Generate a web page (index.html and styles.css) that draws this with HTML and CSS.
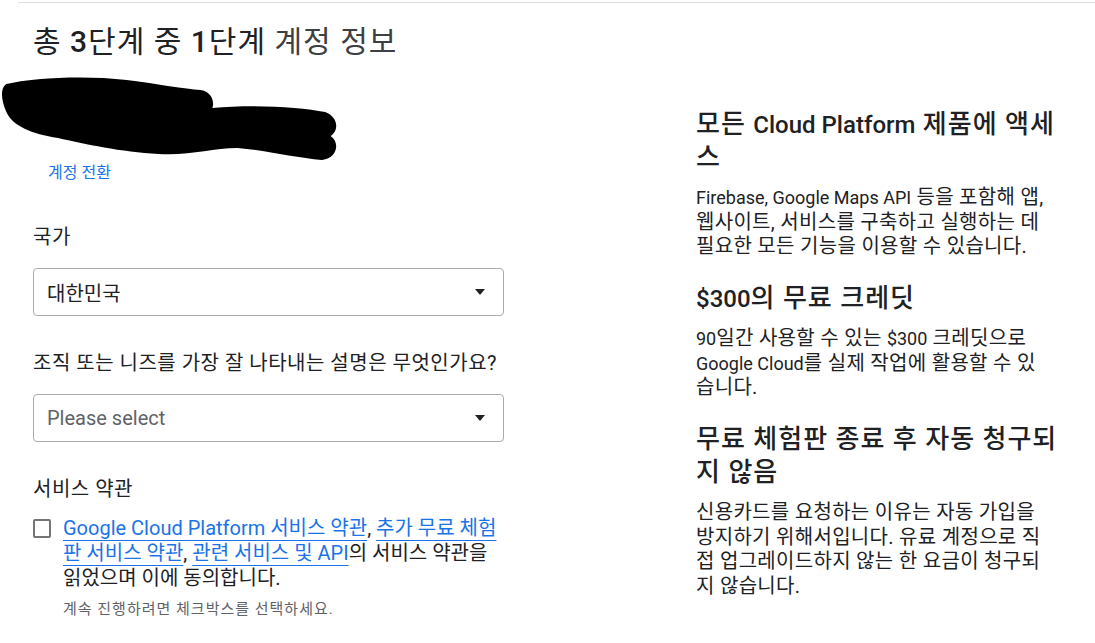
FILE: index.html
```html
<!DOCTYPE html>
<html lang="ko">
<head>
    <meta charset="UTF-8">
    <meta name="viewport" content="width=device-width, initial-scale=1.0">
    <title>Google Cloud 무료 체험</title>
    <link rel="stylesheet" href="styles.css">
</head>
<body>
    <div class="topbar"></div>

    <main class="page">
        <section class="signup">
            <h1 class="step-title">총 <span class="num">3</span>단계 중 <span class="num">1</span>단계 <span class="step-name">계정 정보</span></h1>

            <div class="account">
                <!-- 계정 이메일 가림 -->
                <svg class="redacted" width="340" height="90" viewBox="0 0 322 90" preserveAspectRatio="none">
                    <path d="M6 10 C30 4 80 1 120 6 C150 10 175 15 190 16 C202 18 203 30 201 34 C240 30 285 33 308 38 C322 44 320 58 313 62 C322 68 320 84 305 86 C280 84 250 76 225 74 C200 74 180 82 150 80 C115 78 80 70 55 64 C30 60 12 52 6 38 C1 26 0 14 6 10 Z" fill="#000"/>
                </svg>
                <a class="switch-link" href="#">계정 전환</a>
            </div>

            <div class="field">
                <div class="field-label">국가</div>
                <div class="select">
                    <span>대한민국</span>
                    <span class="caret"></span>
                </div>
            </div>

            <div class="field">
                <div class="field-label">조직 또는 니즈를 가장 잘 나타내는 설명은 무엇인가요?</div>
                <div class="select">
                    <span class="placeholder">Please select</span>
                    <span class="caret"></span>
                </div>
            </div>

            <div class="field">
                <div class="field-label">서비스 약관</div>
                <div class="terms">
                    <span class="checkbox"></span>
                    <p class="terms-text"><a href="#">Google Cloud Platform 서비스 약관</a>, <a href="#">추가 무료 체험판 서비스 약관</a>, <a href="#">관련 서비스 및 API</a>의 서비스 약관을 읽었으며 이에 동의합니다.</p>
                </div>
                <p class="hint">계속 진행하려면 체크박스를 선택하세요.</p>
            </div>
        </section>

        <aside class="benefits">
            <h2>모든 <span lang="en">Cloud Platform</span> 제품에 액세스</h2>
            <p><span lang="en">Firebase, Google Maps API</span> 등을 포함해 앱, 웹사이트, 서비스를 구축하고 실행하는 데 필요한 모든 기능을 이용할 수 있습니다.</p>

            <h2><span lang="en">$300</span>의 무료 크레딧</h2>
            <p><span lang="en">90</span>일간 사용할 수 있는 <span lang="en">$300</span> 크레딧으로 <span lang="en">Google Cloud</span>를 실제 작업에 활용할 수 있습니다.</p>

            <h2>무료 체험판 종료 후 자동 청구되지 않음</h2>
            <p>신용카드를 요청하는 이유는 자동 가입을 방지하기 위해서입니다. 유료 계정으로 직접 업그레이드하지 않는 한 요금이 청구되지 않습니다.</p>
        </aside>
    </main>
</body>
</html>
```

FILE: styles.css
```css
body {
    margin: 0;
    font-family: Roboto, "Noto Sans CJK KR", sans-serif;
    color: #202124;
    background-color: #fff;
}
.topbar {
    height: 2px;
    margin-left: 18px;
    border-bottom: 1px solid #dadce0;
}
.page {
    display: flex;
    padding-left: 33px;
}
.signup {
    width: 471px;
    flex-shrink: 0;
}
.step-title {
    margin: 21px 0 0;
    font-size: 30px;
    line-height: 36px;
    font-weight: 400;
    letter-spacing: 1px;
    color: #202124;
}
.step-title .num {
    font-weight: 500;
}
.step-name {
    color: #3c4043;
}
.account {
    display: flex;
    flex-direction: column;
    align-items: flex-start;
    margin-top: 14px;
    padding-bottom: 7px;
}
.redacted {
    display: block;
    margin-left: -33px;
    margin-bottom: -1px;
}
.switch-link {
    margin-left: 15px;
    font-size: 16px;
    line-height: 20px;
    color: #1a73e8;
    text-decoration: none;
}
.field {
    margin-top: 34px;
}
.field-label {
    font-size: 20px;
    line-height: 26px;
    letter-spacing: 0.5px;
    margin-bottom: 18px;
}
.select {
    display: flex;
    align-items: center;
    box-sizing: border-box;
    height: 48px;
    padding: 0 18px 0 13px;
    border: 1px solid #a8abaf;
    border-radius: 4px;
    font-size: 20px;
}
.placeholder {
    color: #5f6368;
}
.caret {
    margin-left: auto;
    width: 0;
    height: 0;
    border-left: 5px solid transparent;
    border-right: 5px solid transparent;
    border-top: 6px solid #202124;
}
.terms {
    display: flex;
    align-items: flex-start;
    gap: 12px;
    margin-top: -4px;
}
.checkbox {
    flex-shrink: 0;
    box-sizing: border-box;
    width: 18px;
    height: 19px;
    margin-top: 3px;
    border: 2px solid #757575;
    border-radius: 2px;
}
.terms-text {
    margin: 0;
    font-size: 20px;
    line-height: 25px;
}
.terms-text a {
    color: #1a73e8;
    text-decoration: underline;
    text-decoration-thickness: 1px;
    text-underline-offset: 5px;
}
.hint {
    margin: 8px 0 0 30px;
    font-size: 15px;
    line-height: 20px;
    letter-spacing: 1px;
    color: #5f6368;
}
.benefits {
    width: 365px;
    margin-left: 192px;
    padding-top: 105px;
}
.benefits h2 {
    margin: 0;
    font-size: 26px;
    line-height: 33px;
    font-weight: 500;
    letter-spacing: 1px;
}
.benefits h2 [lang="en"] {
    font-size: 24px;
    line-height: 1;
    letter-spacing: 0;
}
.benefits p {
    max-width: 352px;
    margin: 11px 0 23.5px;
    font-size: 20px;
    line-height: 24.5px;
    letter-spacing: 0.3px;
}
.benefits p [lang="en"] {
    font-size: 18px;
    line-height: 1;
    letter-spacing: 0;
}
```
